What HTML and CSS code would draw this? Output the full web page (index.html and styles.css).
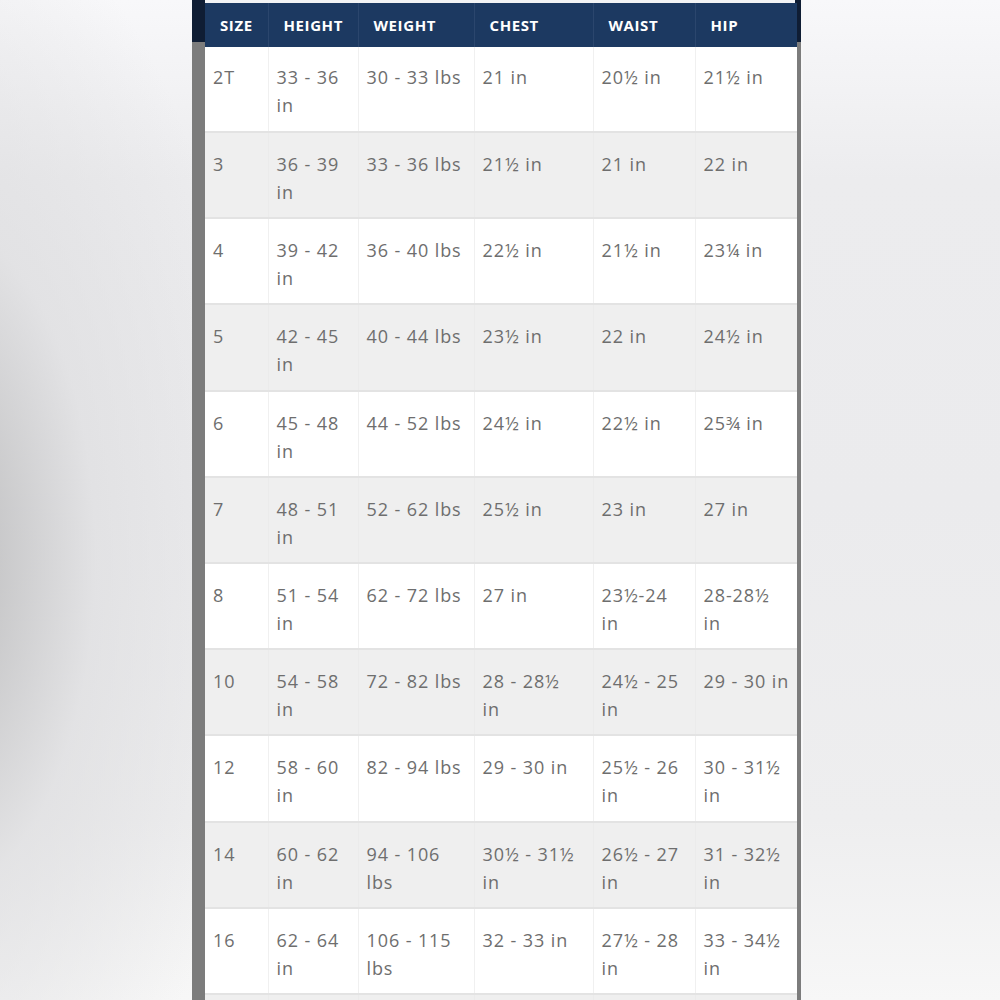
FILE: index.html
```html
<!DOCTYPE html>
<html lang="en">
<head>
<meta charset="utf-8">
<title>Size Chart</title>
<link rel="stylesheet" href="styles.css">
</head>
<body>
<div class="stage">
  <div class="frame">
    <div class="topgap"></div>
    <table class="chart">
      <colgroup>
        <col class="c-size"><col class="c-height"><col class="c-weight"><col class="c-chest"><col class="c-waist"><col class="c-hip">
      </colgroup>
      <thead>
        <tr><th>SIZE</th><th>HEIGHT</th><th>WEIGHT</th><th>CHEST</th><th>WAIST</th><th>HIP</th></tr>
      </thead>
      <tbody>
        <tr><td>2T</td><td>33 - 36<br>in</td><td>30 - 33 lbs</td><td>21 in</td><td>20½ in</td><td>21½ in</td></tr>
        <tr><td>3</td><td>36 - 39<br>in</td><td>33 - 36 lbs</td><td>21½ in</td><td>21 in</td><td>22 in</td></tr>
        <tr><td>4</td><td>39 - 42<br>in</td><td>36 - 40 lbs</td><td>22½ in</td><td>21½ in</td><td>23¼ in</td></tr>
        <tr><td>5</td><td>42 - 45<br>in</td><td>40 - 44 lbs</td><td>23½ in</td><td>22 in</td><td>24½ in</td></tr>
        <tr><td>6</td><td>45 - 48<br>in</td><td>44 - 52 lbs</td><td>24½ in</td><td>22½ in</td><td>25¾ in</td></tr>
        <tr><td>7</td><td>48 - 51<br>in</td><td>52 - 62 lbs</td><td>25½ in</td><td>23 in</td><td>27 in</td></tr>
        <tr><td>8</td><td>51 - 54<br>in</td><td>62 - 72 lbs</td><td>27 in</td><td>23½-24<br>in</td><td>28-28½<br>in</td></tr>
        <tr><td>10</td><td>54 - 58<br>in</td><td>72 - 82 lbs</td><td>28 - 28½<br>in</td><td>24½ - 25<br>in</td><td>29 - 30 in</td></tr>
        <tr><td>12</td><td>58 - 60<br>in</td><td>82 - 94 lbs</td><td>29 - 30 in</td><td>25½ - 26<br>in</td><td>30 - 31½<br>in</td></tr>
        <tr><td>14</td><td>60 - 62<br>in</td><td>94 - 106<br>lbs</td><td>30½ - 31½<br>in</td><td>26½ - 27<br>in</td><td>31 - 32½<br>in</td></tr>
        <tr><td>16</td><td>62 - 64<br>in</td><td>106 - 115<br>lbs</td><td>32 - 33 in</td><td>27½ - 28<br>in</td><td>33 - 34½<br>in</td></tr>
        <tr class="more"><td></td><td></td><td></td><td></td><td></td><td></td></tr>
      </tbody>
    </table>
    <div class="thumb"></div>
  </div>
</div>
</body>
</html>
```

FILE: styles.css
```css
html, body {
  margin: 0;
  padding: 0;
}

body {
  width: 1000px;
  height: 1000px;
  overflow: hidden;
  background:
    radial-gradient(ellipse 330px 680px at -70px 560px, #b7b7b8 0%, rgba(222,222,224,0.7) 50%, rgba(240,240,242,0) 100%),
    linear-gradient(180deg, #f8f8fa 0%, #ececee 18%, #ebebed 50%, #eeeeef 82%, #f7f7f7 100%);
}

.stage {
  display: flex;
  height: 1000px;
  padding-left: 192px;
}

.frame {
  position: relative;
  box-sizing: border-box;
  width: 611px;
  height: 1000px;
  padding: 0 6px 0 13px;
  background: linear-gradient(180deg, #0f1d34 0, #0f1d34 42px, #7c7c7c 42px, #7c7c7c 100%);
  border-right: 2px solid #f7f7f8;
  overflow: hidden;
}

.topgap {
  height: 3px;
  background: #f2f3f5;
}

.chart {
  width: 592px;
  table-layout: fixed;
  border-collapse: collapse;
  font-family: "Open Sans", "Liberation Sans", sans-serif;
}

.c-size { width: 63px; }
.c-height { width: 90px; }
.c-weight { width: 116px; }
.c-chest { width: 119px; }
.c-waist { width: 102px; }
.c-hip { width: 102px; }

.chart th {
  height: 44px;
  padding: 0 0 0 15px;
  box-sizing: border-box;
  background: #1c3961;
  color: #ffffff;
  font-size: 15px;
  font-weight: 700;
  letter-spacing: 0.6px;
  text-align: left;
  border-right: 1px solid #2b466d;
  white-space: nowrap;
}

.chart th:last-child {
  border-right: none;
}

.chart td {
  padding: 17px 4px 11.2px 8px;
  vertical-align: top;
  font-size: 18px;
  line-height: 28px;
  letter-spacing: 0.9px;
  color: #6e6e6e;
  white-space: nowrap;
  border-top: 2px solid #e3e3e3;
  border-right: 1px solid #f0f0f0;
  background: #ffffff;
}

.chart td:last-child {
  border-right: none;
}

.chart tbody tr:first-child td {
  border-top: none;
  padding-top: 16px;
  padding-bottom: 12px;
}

.chart tbody tr:nth-child(even) td {
  background: #efefef;
  border-right-color: #ebebeb;
}

.chart tbody tr.more td {
  height: 40px;
  padding: 0;
}

.thumb {
  position: absolute;
  left: 610px;
  top: 209px;
  width: 4px;
  height: 548px;
  border-radius: 2px;
  background: #9b9b9b;
}
```
